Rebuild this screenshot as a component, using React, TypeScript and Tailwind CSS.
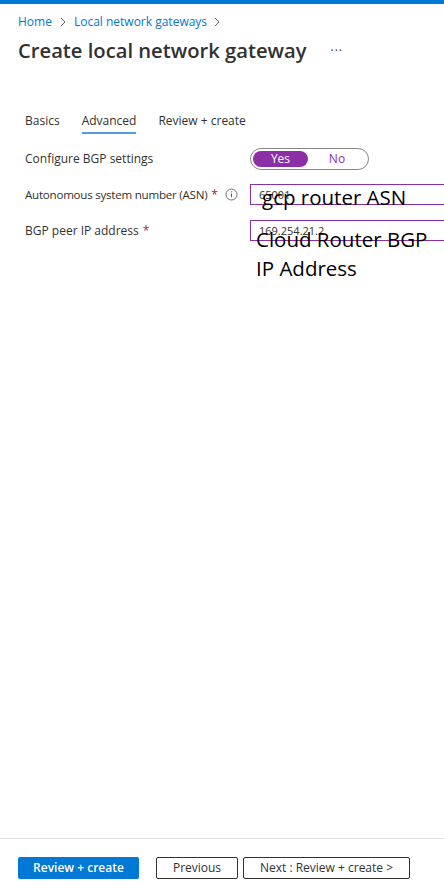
import React from "react";

export default function App() {
  const font = { fontFamily: '"Open Sans", "Noto Sans", sans-serif' };
  return (
    <div className="relative w-[444px] h-[892px] overflow-hidden bg-white flex flex-col text-[#323130]" style={font}>
      <div className="h-[4px] bg-[#0078d4] shrink-0" />
      <div className="px-[18px] pt-[10px] flex items-center gap-[6px] text-[12px] text-[#0078d4] leading-[16px]">
        <span>Home</span>
        <svg width="8" height="10" viewBox="0 0 8 10" className="mx-[1px]"><path d="M2 1l4 4-4 4" fill="none" stroke="#605e5c" strokeWidth="1" /></svg>
        <span>Local network gateways</span>
        <svg width="8" height="10" viewBox="0 0 8 10"><path d="M2 1l4 4-4 4" fill="none" stroke="#605e5c" strokeWidth="1" /></svg>
      </div>
      <div className="px-[18px] mt-[6px] flex items-center">
        <h1 className="text-[20.2px] font-semibold leading-[28px] text-[#323130] whitespace-nowrap">Create local network gateway</h1>
        <span className="ml-[24px] text-[12px] text-[#323130] tracking-[1px] mt-[2px]">···</span>
      </div>
      <div className="px-[25px] mt-[49px] flex gap-[22px] text-[12px] leading-[16px]">
        <div className="pb-[5px]">Basics</div>
        <div className="pb-[3px] border-b-2 border-[#4f9fe0]">Advanced</div>
        <div className="pb-[5px]">Review + create</div>
      </div>
      <div className="relative pl-[25px] mt-[14px] flex flex-col text-[12px] leading-[16px]">
        <div className="flex items-center h-[22px]">
          <span className="w-[225px] shrink-0 whitespace-nowrap">Configure BGP settings</span>
          <div className="w-[119px] h-[22px] rounded-full border border-[#8a8886] flex items-center px-[2px] shrink-0">
            <div className="w-[55px] h-[16px] rounded-full bg-[#8c2ea6] text-white flex items-center justify-center text-[12px]">Yes</div>
            <div className="flex-1 text-center text-[#8c2ea6] text-[12px]">No</div>
          </div>
        </div>
        <div className="flex items-center h-[21px] mt-[14px]">
          <span className="w-[225px] shrink-0 whitespace-nowrap flex items-center">
            <span className="text-[11.6px] tracking-[-0.25px]">Autonomous system number (ASN)</span><span className="text-[#a4262c] ml-[4px]">*</span>
            <svg width="13" height="13" viewBox="0 0 13 13" className="ml-[7px]"><circle cx="6.5" cy="6.5" r="5.5" fill="none" stroke="#605e5c" strokeWidth="0.9" /><path d="M6.5 5.5v3.7" stroke="#605e5c" strokeWidth="1" /><circle cx="6.5" cy="3.8" r="0.65" fill="#605e5c" /></svg>
          </span>
          <div className="w-[210px] shrink-0 h-[21px] border border-[#8c2ea6] flex items-center pl-[8px] text-[11px] text-[#323130]">65001</div>
        </div>
        <div className="flex items-center h-[21px] mt-[15px]">
          <span className="w-[225px] shrink-0 whitespace-nowrap">BGP peer IP address<span className="text-[#a4262c] ml-[4px]">*</span></span>
          <div className="w-[210px] shrink-0 h-[21px] border border-[#8c2ea6] flex items-center pl-[8px] text-[11px] text-[#323130]">169.254.21.2</div>
        </div>
        <div className="absolute left-[262px] top-[35px] text-[20.5px] leading-[28px] text-black whitespace-nowrap">gcp router ASN</div>
        <div className="absolute left-[256px] top-[77px] text-[20.5px] leading-[29px] text-black whitespace-nowrap">Cloud Router BGP<br />IP Address</div>
      </div>
      <div className="flex-1" />
      <div className="border-t border-[#e1dfdd] h-[54px] shrink-0 px-[18px] pt-[18px] flex items-start gap-[17px]">
        <button className="w-[121px] h-[22px] bg-[#0078d4] text-white text-[12px] font-semibold rounded-[2px]">Review + create</button>
        <div className="flex gap-[5px]">
          <button className="w-[82px] h-[22px] border border-[#323130] text-[12px] rounded-[2px]">Previous</button>
          <button className="w-[167px] h-[22px] border border-[#323130] text-[12px] rounded-[2px]">Next : Review + create &gt;</button>
        </div>
      </div>
    </div>
  );
}
